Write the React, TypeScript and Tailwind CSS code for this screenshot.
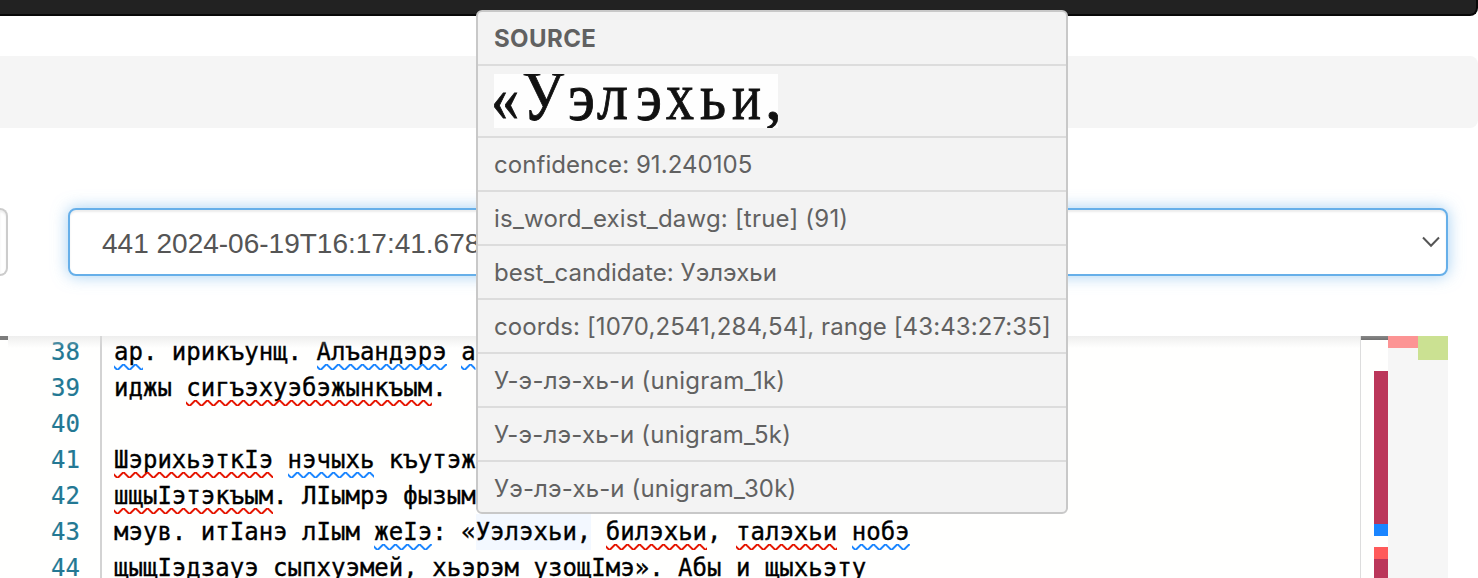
import React from 'react';

type Part = string | { t: string; k: 'r' | 'b' | 'h' };

const red = (t: string): Part => ({ t, k: 'r' });
const blue = (t: string): Part => ({ t, k: 'b' });
const mark = (t: string): Part => ({ t, k: 'h' });

const LINES: { n: number; parts: Part[] }[] = [
  { n: 38, parts: [blue('ар'), '. ирикъунщ. ', blue('Алъандэрэ'), ' ', blue('а')] },
  { n: 39, parts: ['иджы ', red('сигъэхуэбэжынкъым'), '.'] },
  { n: 40, parts: [''] },
  { n: 41, parts: [red('ШэрихьэткIэ'), ' ', blue('нэчыхь'), ' къутэж'] },
  { n: 42, parts: [red('шщыIэтэкъым'), '. ЛIымрэ фызым'] },
  {
    n: 43,
    parts: ['мэув. итIанэ лIым ', blue('жеIэ'), ': «', mark('Уэлэхьи,'), ' ', red('билэхьи'), ', ', red('талэхьи'), ' ', blue('нобэ')],
  },
  { n: 44, parts: ['щыщIэдзауэ сыпхуэмей, хьэрэм узощIмэ». Абы и щыхьэту'] },
];

function Squiggle({ color, id }: { color: string; id: string }) {
  return (
    <svg className="absolute bottom-0 left-0 h-[6px] w-full" aria-hidden="true">
      <defs>
        <pattern id={id} width="12" height="6" patternUnits="userSpaceOnUse">
          <g transform="scale(2)" fill={color}>
            <polygon points="5.5,0 2.5,3 1.1,3 4.1,0" />
            <polygon points="4,0 6,2 6,0.6 5.4,0" />
            <polygon points="0,2 1,3 2.4,3 0,0.6" />
          </g>
        </pattern>
      </defs>
      <rect width="100%" height="6" fill={`url(#${id})`} />
    </svg>
  );
}

function Token({ part, id }: { part: Part; id: string }) {
  if (typeof part === 'string') return <span className="whitespace-pre">{part}</span>;
  if (part.k === 'h') return <span className="h-9 bg-[#f3f8ff]">{part.t}</span>;
  return (
    <span className="relative h-9">
      {part.t}
      <Squiggle color={part.k === 'r' ? '#e51400' : '#1a85ff'} id={id} />
    </span>
  );
}

const GLYPHS: { c: string; x: number; w: number; size: number; y: number }[] = [
  { c: '«', x: -3, w: 28, size: 66, y: 46 },
  { c: 'У', x: 28, w: 42, size: 71, y: 45.5 },
  { c: 'э', x: 74, w: 27, size: 68, y: 45.5 },
  { c: 'л', x: 103, w: 31, size: 68, y: 45 },
  { c: 'э', x: 142, w: 26, size: 68, y: 46 },
  { c: 'х', x: 172, w: 28, size: 68, y: 45 },
  { c: 'ь', x: 206, w: 26, size: 66, y: 44.5 },
  { c: 'и', x: 238, w: 29, size: 66, y: 44.5 },
  { c: ',', x: 271, w: 17, size: 68, y: 45 },
];

function ScannedWord() {
  return (
    <svg width="284" height="54" className="block bg-[#fefefe]">
      <g
        className="blur-[0.7px]"
        fill="#111"
        stroke="#111"
        strokeWidth="0.9"
        fontFamily="'Liberation Serif', serif"
      >
        {GLYPHS.map((g, i) => (
          <text key={i} x={g.x} y={g.y} fontSize={g.size} textLength={g.w} lengthAdjust="spacingAndGlyphs">
            {g.c}
          </text>
        ))}
      </g>
    </svg>
  );
}

const ROWS: { text: string; cls: string }[] = [
  { text: 'confidence: 91.240105', cls: 'tracking-[0.06px]' },
  { text: 'is_word_exist_dawg: [true] (91)', cls: 'tracking-[0.2px]' },
  { text: 'best_candidate: Уэлэхьи', cls: 'tracking-[0.05px]' },
  { text: 'coords: [1070,2541,284,54], range [43:43:27:35]', cls: 'tracking-[0.1px]' },
  { text: 'У-э-лэ-хь-и (unigram_1k)', cls: 'tracking-[0.2px]' },
  { text: 'У-э-лэ-хь-и (unigram_5k)', cls: 'tracking-[0.18px]' },
  { text: 'Уэ-лэ-хь-и (unigram_30k)', cls: 'tracking-[0.14px]' },
];

function HoverCard() {
  return (
    <div className="absolute left-[476px] top-[10px] h-[504px] w-[592px] overflow-hidden rounded-[6px] border-2 border-[#c8c8c8] bg-[#f3f3f3] font-['Inter',sans-serif] text-[24px] text-[#616161]">
      <div className="flex h-[52px] items-center px-4 pt-[2px] font-bold">
        <span className="tracking-[0.4px]">SOURCE</span>
      </div>
      <div className="flex h-[72px] items-center border-t-2 border-[#dcdcdc] px-4">
        <ScannedWord />
      </div>
      {ROWS.map((r) => (
        <div key={r.text} className="flex h-[54px] items-center whitespace-nowrap border-t-2 border-[#dcdcdc] px-4 pt-[2px]">
          <span className={r.cls}>{r.text}</span>
        </div>
      ))}
    </div>
  );
}

export default function App() {
  return (
    <div className="relative flex h-[578px] w-[1478px] flex-col overflow-hidden bg-white">
      <div className="h-4 shrink-0 rounded-br-[8px] border-b-2 border-r-2 border-[#080808] bg-[#222222]" />
      <div className="mt-10 h-[72px] shrink-0 rounded-r-[8px] bg-[#f5f5f5]" />
      <div className="mt-20 flex h-[68px] shrink-0">
        <div className="w-2 rounded-r-[8px] border-2 border-l-0 border-[#cccccc] bg-white shadow-[inset_0_2px_2px_rgba(0,0,0,0.075)]" />
        <div className="ml-[60px] flex w-[1380px] items-center justify-between rounded-[8px] border-2 border-[#66afe9] bg-white pl-8 pr-[6px] shadow-[inset_0_2px_2px_rgba(0,0,0,0.075),0_0_16px_rgba(102,175,233,0.6)]">
          <span className="pt-[3px] font-['Liberation_Sans',sans-serif] text-[28px] leading-10 text-[#555555]">
            441 2024-06-19T16:17:41.678
          </span>
          <svg width="18" height="12" viewBox="0 0 18 12" fill="none" stroke="#555" strokeWidth="2">
            <path d="M1 1.5 9 9.7 17 1.5" />
          </svg>
        </div>
      </div>

      <div className="mt-[60px] flex h-[242px] shrink-0 overflow-hidden">
        <div className="relative flex w-[1361px] overflow-hidden border-r border-[#dddddd] bg-[#fffffe] font-['DejaVu_Sans_Mono',monospace] text-[24px] leading-9">
          <div className="-mt-[2px] w-[80px] shrink-0 text-right text-[#237893] [-webkit-text-stroke:0.2px_#237893]">
            {LINES.map((l) => (
              <div key={l.n} className="h-9">{l.n}</div>
            ))}
          </div>
          <div className="ml-5 w-[2px] shrink-0 bg-[#d3d3d3]" />
          <div className="-mt-[2px] ml-3 tracking-[0.015px] text-black [-webkit-text-stroke:0.35px_#000]">
            {LINES.map((l) => (
              <div key={l.n} className="flex h-9 whitespace-nowrap">
                {l.parts.map((p, i) => (
                  <Token key={i} part={p} id={`sq-${l.n}-${i}`} />
                ))}
              </div>
            ))}
          </div>
          <div className="absolute left-2 right-0 top-0 h-3 bg-gradient-to-b from-[#dddddd]/50 to-transparent" />
          <div className="absolute left-0 top-0 h-1 w-2 bg-[#7c7c7c]" />
        </div>
        <div className="flex w-[27px] flex-col items-end bg-[#fffffe]">
          <div className="h-1 w-full shrink-0 bg-gradient-to-b from-[#888888] to-[#727272]" />
          <div className="mt-[31px] h-[153px] w-[14px] shrink-0 bg-[#bb365a]" />
          <div className="h-3 w-[14px] shrink-0 bg-[#1a85ff]" />
          <div className="mt-[11px] h-3 w-[14px] shrink-0 bg-[#ff5a5a]" />
          <div className="h-[19px] w-[14px] shrink-0 bg-[#bb365a]" />
        </div>
        <div className="flex w-[60px] items-start bg-[#f6f6f6]">
          <div className="h-3 w-[30px] bg-[#fc9494]" />
          <div className="h-6 w-[30px] bg-[#cbe192]" />
        </div>
      </div>

      <HoverCard />
    </div>
  );
}
